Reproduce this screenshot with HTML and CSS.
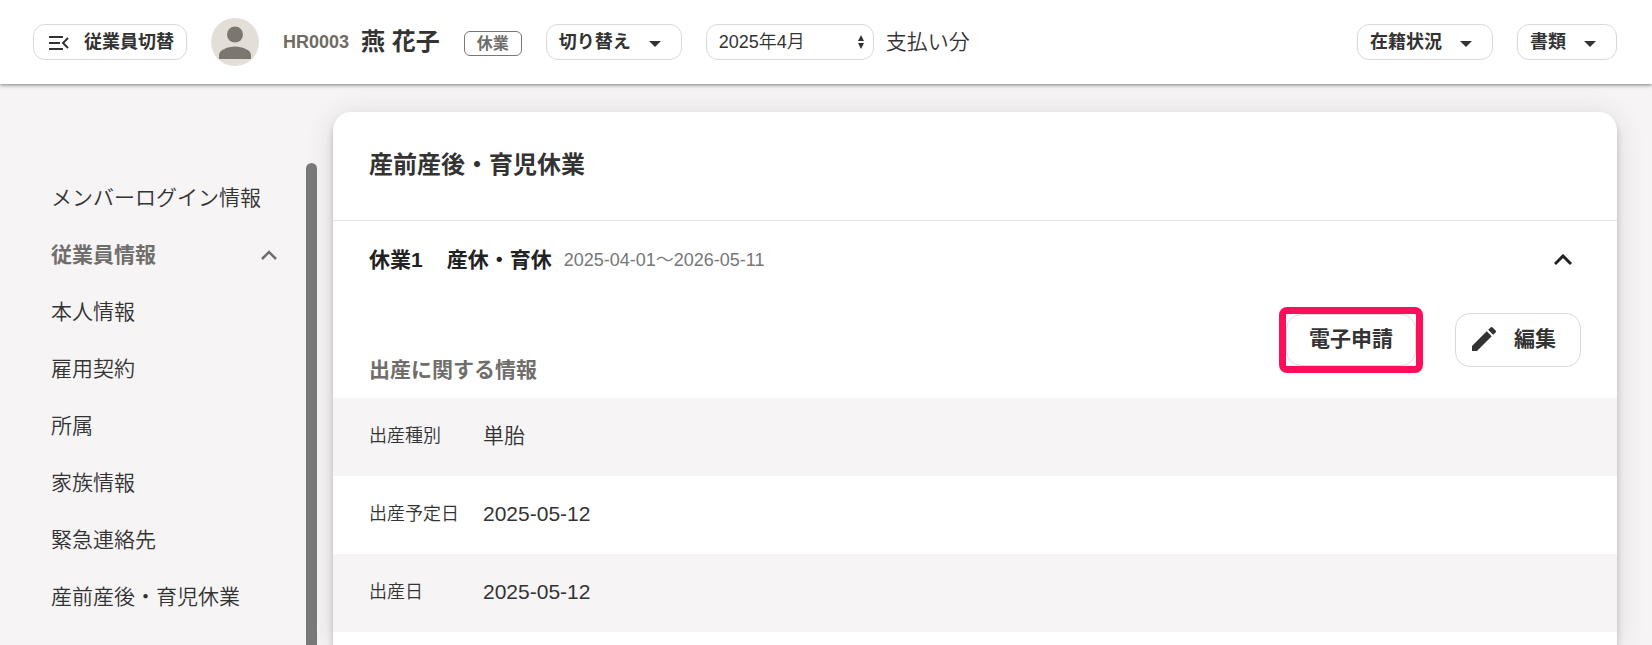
FILE: index.html
```html
<!DOCTYPE html>
<html lang="ja">
<head>
    <meta charset="UTF-8">
    <meta name="viewport" content="width=device-width, initial-scale=1.0">
    <title>産前産後・育児休業</title>
    <link rel="stylesheet" href="styles.css">
</head>
<body>

    <!-- Top bar -->
    <header class="topbar">
        <button type="button" class="btn btn-switch">
            <svg class="icon-menu" width="22" height="16" viewBox="0 0 22 16" fill="none" stroke="currentColor" stroke-width="2">
                <path d="M1 2h14M1 8h11M1 14h14M20 3l-5 5 5 5"/>
            </svg>
            従業員切替
        </button>
        <svg class="avatar" width="48" height="48" viewBox="0 0 48 48">
            <circle cx="24" cy="24" r="24" fill="#e3dfd8"/>
            <circle cx="24" cy="16.500" r="8" fill="#7b776f"/>
            <path d="M8 41v-4c0-5 9-8.500 16-8.500s16 3.500 16 8.500v4z" fill="#7b776f"/>
        </svg>
        <div class="employee">
            <span class="code">HR0003</span>
            <span class="name">燕 花子</span>
        </div>
        <span class="badge">休業</span>
        <button type="button" class="btn">切り替え<span class="caret"></span></button>
        <div class="period">
            <div class="select-wrap">
                <select id="month" class="month">
                    <option>2025年4月</option>
                </select>
                <svg class="icon-sort" width="6" height="14" viewBox="0 0 6 14" fill="#333">
                    <path d="M3 0l3 6H0zM3 14l3-6H0z"/>
                </svg>
            </div>
            <label for="month">支払い分</label>
        </div>
        <div class="topbar-right">
            <button type="button" class="btn">在籍状況<span class="caret"></span></button>
            <button type="button" class="btn">書類<span class="caret"></span></button>
        </div>
    </header>

    <div class="layout">
        <!-- Side menu -->
        <nav class="sidebar">
            <ul class="menu">
                <li><a href="#">メンバーログイン情報</a></li>
                <li>
                    <a href="#" class="group">従業員情報
                        <svg width="16" height="10" viewBox="0 0 16 10" fill="none" stroke="currentColor" stroke-width="2.500">
                            <path d="M1 9l7-7 7 7"/>
                        </svg>
                    </a>
                </li>
                <li><a href="#">本人情報</a></li>
                <li><a href="#">雇用契約</a></li>
                <li><a href="#">所属</a></li>
                <li><a href="#">家族情報</a></li>
                <li><a href="#">緊急連絡先</a></li>
                <li><a href="#">産前産後・育児休業</a></li>
            </ul>
            <div class="scroll-thumb"></div>
        </nav>

        <!-- Leave details -->
        <main class="card">
            <h1 class="card-title">産前産後・育児休業</h1>
            <div class="leave-head">
                <h2><span>休業1</span><span>産休・育休</span></h2>
                <span class="range">2025-04-01～2026-05-11</span>
                <button type="button" class="toggle" aria-label="閉じる">
                    <svg width="18" height="12" viewBox="0 0 18 12" fill="none" stroke="currentColor" stroke-width="3">
                        <path d="M1 10l8-8 8 8"/>
                    </svg>
                </button>
            </div>
            <div class="section-head">
                <h3>出産に関する情報</h3>
                <div class="actions">
                    <div class="highlight">
                        <button type="button" class="btn btn-large">電子申請</button>
                    </div>
                    <button type="button" class="btn btn-large">
                        <svg width="24" height="24" viewBox="3 3 18 18" fill="currentColor">
                            <path d="M3 17.250V21h3.750L17.810 9.940l-3.750-3.750L3 17.250zM20.710 7.040a1 1 0 0 0 0-1.410l-2.340-2.340a1 1 0 0 0-1.410 0l-1.830 1.830 3.750 3.750 1.830-1.830z"/>
                        </svg>
                        編集
                    </button>
                </div>
            </div>
            <table class="details">
                <tr><th scope="row">出産種別</th><td>単胎</td></tr>
                <tr><th scope="row">出産予定日</th><td>2025-05-12</td></tr>
                <tr><th scope="row">出産日</th><td>2025-05-12</td></tr>
            </table>
        </main>
    </div>

</body>
</html>
```
FILE: styles.css
```css
* {
    box-sizing: border-box;
}

body {
    margin: 0;
    height: 100vh;
    display: flex;
    flex-direction: column;
    overflow: hidden;
    background-color: #f6f4f5;
    color: #333;
    font-family: "Liberation Sans", "Noto Sans CJK JP", sans-serif;
    font-size: 21px;
    font-weight: 350;
    line-height: 30px;
}

h1, h2, h3 {
    margin: 0;
    font-size: 21px;
}

svg {
    display: block;
    flex-shrink: 0;
}

/* Top bar */
.topbar {
    display: flex;
    align-items: center;
    flex-shrink: 0;
    gap: 24px;
    height: 84px;
    padding: 0 35px 0 33px;
    background-color: #fff;
    box-shadow: 0 1px 4px rgba(0, 0, 0, 0.5);
    white-space: nowrap;
    position: relative;
    z-index: 1;
}

.btn {
    display: flex;
    align-items: center;
    height: 36px;
    padding: 0 12px;
    border: 1px solid #d9d9d9;
    border-radius: 12px;
    background-color: #fff;
    color: #333;
    font-family: inherit;
    font-size: 18px;
    font-weight: bold;
    line-height: 30px;
    cursor: pointer;
}

.btn-switch {
    gap: 14px;
    padding-left: 14px;
}

.icon-menu {
    margin-top: 2px;
}

.caret {
    margin: 3px 8px 0 18px;
    border: 6px solid transparent;
    border-top-color: #333;
    border-bottom: 0;
}

.employee {
    display: flex;
    align-items: center;
    gap: 12px;
    font-weight: bold;
}

.code {
    font-size: 18px;
    color: #706b62;
}

.name {
    font-size: 24px;
}

.badge {
    margin-top: 2px;
    padding: 0 12px;
    border: 1px solid #777;
    border-radius: 6px;
    color: #706e6b;
    font-size: 16px;
    font-weight: bold;
    line-height: 23px;
}

.period {
    display: flex;
    align-items: center;
    gap: 12px;
}

.select-wrap {
    position: relative;
}

.month {
    appearance: none;
    display: block;
    width: 168px;
    height: 36px;
    padding: 0 12px;
    border: 1px solid #d9d9d9;
    border-radius: 12px;
    background-color: #fff;
    color: #333;
    font-family: inherit;
    font-size: 18px;
    font-weight: inherit;
}

.icon-sort {
    position: absolute;
    top: 11px;
    right: 10px;
    pointer-events: none;
}

.topbar-right {
    display: flex;
    gap: 24px;
    margin-left: auto;
}

/* Page body */
.layout {
    display: flex;
    flex: 1;
    min-height: 0;
    gap: 16px;
    padding: 28px 35px 0 0;
}

.sidebar {
    display: flex;
    width: 317px;
    flex-shrink: 0;
    padding-top: 51px;
}

.menu {
    flex: 1;
    margin: 0;
    padding: 6px 29px 0 51px;
    list-style: none;
}

.menu a {
    display: flex;
    align-items: center;
    justify-content: space-between;
    height: 57px;
    color: #333;
    text-decoration: none;
    white-space: nowrap;
}

.menu .group {
    color: #706e6b;
    font-weight: bold;
}

.scroll-thumb {
    width: 11px;
    border-radius: 6px 6px 0 0;
    background-color: #7a7a7a;
}

.card {
    flex: 1;
    min-width: 0;
    border-radius: 18px 18px 0 0;
    background-color: #fff;
    box-shadow: 0 5px 6px rgba(0, 0, 0, 0.2), 0 4px 30px rgba(0, 0, 0, 0.12);
}

.card-title {
    padding: 35px 36px 37px;
    border-bottom: 1px solid #e3e3e3;
    font-size: 24px;
    line-height: 36px;
}

.leave-head {
    display: flex;
    align-items: center;
    gap: 12px;
    height: 78px;
    padding: 0 36px;
    color: #222;
}

.leave-head h2 {
    display: flex;
    gap: 24px;
}

.range {
    color: #777;
    font-size: 18px;
}

.toggle {
    margin-left: auto;
    padding: 9px;
    border: 0;
    background: none;
    color: #222;
    cursor: pointer;
}

.section-head {
    display: flex;
    justify-content: space-between;
    align-items: flex-end;
    height: 99px;
    padding: 0 36px 13px;
}

.section-head h3 {
    color: #706e6b;
}

.actions {
    display: flex;
    align-items: center;
    gap: 32px;
    margin-bottom: 12px;
}

.highlight {
    border: 7px solid #ff0f5b;
    border-radius: 8px;
}

.btn-large {
    gap: 18px;
    height: 54px;
    padding: 0 24px 2px 16px;
    border-radius: 15px;
    font-size: 21px;
}

.highlight .btn-large {
    height: 52px;
    padding: 0 22px 2px;
}

.details {
    width: 100%;
    border-collapse: collapse;
}

.details tr:nth-child(odd) {
    background-color: #f6f4f5;
}

.details th,
.details td {
    height: 78px;
    padding: 0 0 2px;
    text-align: left;
    font-weight: inherit;
}

.details th {
    width: 150px;
    padding-left: 36px;
    font-size: 18px;
}
```
